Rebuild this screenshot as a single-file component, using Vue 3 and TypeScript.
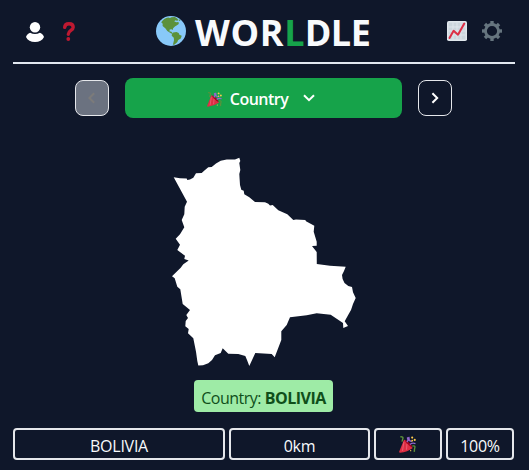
<script setup lang="ts">
const guess = { name: 'BOLIVIA', distance: '0km', proximity: '100%' }
const outline =
  '173.7,177.3 180,178.3 186.7,178.4 187.3,180 190,179.5 193.3,177.7 196,173.3 201.7,173 205,170 208.3,167.3 211.7,167 216,163.5 220.7,160.7 226.7,159.5 235,159.5 239.3,157.8 240.3,161 239.3,163 240.3,170 239.3,174 240,185 241.3,189.7 243.7,190.7 244.3,194.3 249.3,197.3 255,202 265,202.3 268.3,203.7 270,205.5 272.7,205 278.3,210.3 287.3,214.3 293.3,220 296,219.5 305.3,220 306,221.3 314.3,225.7 313.7,231.7 316.7,241.7 316.7,245.7 312,246 316.7,252 316.8,264 330,265.7 345.7,266.7 344,271 342,275 342.6,279 344.5,283 348.3,286 352,287 353,292.3 355.7,298 353,304 351,310 349,313.5 344.7,321.3 348,326 343.3,328 343,323 330.7,314.7 316.7,313.3 306.7,315.3 290,317.3 286.7,325 281.3,331.3 281.3,340 274.7,357.3 271.7,354 255.3,353 249.3,366 247,360 245.3,356 238.3,354 228.3,353.7 222.7,348.3 220.7,353 215,355.3 212,360 208.3,363.3 203,365.3 198.3,365.5 197.3,361 196,351.7 193.3,338.3 188,333.3 188.7,329 185.3,326.3 185.7,321 188,318 186.3,315 190,310 182.7,304 180.3,289.3 177.3,286.7 174.7,278.3 172,276.3 180.7,267.7 183.3,264.3 188.7,260.5 184.3,259 185,255.7 177.3,250 180,244.7 175.7,238.7 180,234.3 184.3,227.3 181.7,220 184.3,214.3 184.7,206.7 187,201.7'
</script>

<template>
  <main class="page">
    <svg class="defs" width="0" height="0" aria-hidden="true">
      <symbol id="popper" viewBox="0 0 16 16">
        <path d="M4.8 3.2 13 11.2Q8 14.8 1 15.8Q-.1 15.7.2 14.6Z" fill="#dd2e44" />
        <path d="M4.6 5.5 3.3 14M7.5 7.5 7 13" stroke="#ea596e" stroke-width="1" />
        <ellipse cx="9" cy="7.1" rx="1" ry="4.6" transform="rotate(-45 9 7.1)" fill="#a0041e" />
        <path d="M1.2.8Q4.3.5 3.6 2.5T3 5.3M12.5 9.6Q15.5 8.7 14.9 11T14.5 15" fill="none" stroke="#5c913b" stroke-width="1.3" />
        <path d="M7.4 5.6Q9.4 3.8 7.8 1.2M10.4 8Q12 6 15.5 7.1M9.2.8 9.7 4.2 12 5.2" fill="none" stroke="#9266cc" stroke-width="1.3" />
        <g fill="#ffcc4d">
          <circle cx="12.4" cy="1.5" r="1" /><circle cx="14.8" cy="3.7" r="1" />
          <circle cx="12.4" cy="4.4" r=".8" /><circle cx="11" cy="13.8" r=".6" />
        </g>
      </symbol>
    </svg>

    <header class="header">
      <div class="tools left">
        <svg width="18" height="20" viewBox="0 0 18 20" fill="#fff">
          <path d="M4.1 10.7Q9 13.2 13.9 10.7C16 11.4 17.6 13 18 15C16.5 18.3 13.2 20 9 20S1.5 18.3 0 15C.4 13 2 11.4 4.1 10.7Z" />
          <circle cx="9" cy="5.2" r="5.2" />
        </svg>
        <svg class="help" width="12" height="19" viewBox="0 0 12 19">
          <path d="M1.7 5.4C1.8 3 3.6 1.8 6 1.8C8.6 1.8 10.2 3.3 10.2 5.3C10.2 8.6 5.3 8.4 5.3 12.3" fill="none" stroke="#be1931" stroke-width="3.4" stroke-linecap="round" />
          <circle cx="5.3" cy="17" r="1.9" fill="#be1931" />
        </svg>
      </div>
      <h1 class="title">
        <svg class="globe" width="30" height="30" viewBox="0 0 30 30">
          <circle cx="15" cy="15" r="15" fill="#88c9f9" />
          <path d="M5.2 6.2C7 3.4 9.4 1.7 12.2 1.4L14 2 15.4 1.3 18.8 1.1 20.5 2.1 22 3.2 21.5 5 19.6 4.3 18.2 5.2 20.2 6.2 22.5 6 22.8 8.1 20.5 9.6 18.9 10.4 17.1 12.3 16.8 14 15.5 13.2 13.7 13.6 13.5 15.4 15 15.6 16.2 16.6 16.5 18 14.8 17.2 11.3 15.1 9.3 12.2 6.6 9.9 6.7 7.8Z" fill="#5c913b" />
          <path d="M17.2 16.5 20.5 15.9 22.7 17 23.4 18.7 25.7 19.8 24.8 22.5 22.2 24.1 21.2 26.2 18.2 28.7 16.9 28.8 18 24.2 17.8 21.8 15.7 19.8 16 17.8Z" fill="#5c913b" />
          <path d="M22.8 3.2 24.3 4.1 24.1 5.1 22.7 4.6Z" fill="#5c913b" />
        </svg>
        <span class="word"><span class="start">WOR</span><span class="accent">L</span><span class="end">DLE</span></span>
      </h1>
      <div class="tools right">
        <svg width="20" height="20" viewBox="0 0 20 20">
          <rect width="20" height="20" rx="1.8" fill="#e1e8ed" />
          <path d="M1.5 1.5h17v17h-17Z" fill="#ccd6dd" />
          <path d="M6 1.5v17M10 1.5v17M14 1.5v17M1.5 6h17M1.5 10h17M1.5 14h17" stroke="#e1e8ed" stroke-width=".9" />
          <path d="M2.5 17 6.6 9.8 11 13.7 17.3 2.5" fill="none" stroke="#dd2e44" stroke-width="2" stroke-linecap="round" stroke-linejoin="round" />
        </svg>
        <svg width="20" height="20" viewBox="0 0 20 20" stroke="#66757f" fill="none">
          <circle cx="10" cy="10" r="6.5" stroke-width="2.8" />
          <path v-for="n in 8" :key="n" d="M10 0V3.5" stroke-width="3.4" :transform="`rotate(${n * 45} 10 10)`" />
        </svg>
      </div>
    </header>

    <nav class="rounds">
      <button class="step disabled" disabled>
        <svg width="8" height="12" viewBox="0 0 8 12"><path d="M6.2 1.2 1.4 6l4.8 4.8" /></svg>
      </button>
      <button class="current">
        <svg class="party" width="15" height="15"><use href="#popper" /></svg>
        <span class="current-text">Country</span>
        <svg class="down" width="12" height="8" viewBox="0 0 12 8"><path d="M1 1.2 6 6.2l5-5" /></svg>
      </button>
      <button class="step">
        <svg width="8" height="12" viewBox="0 0 8 12"><path d="M1.4 1.2 6.2 6l-4.8 4.8" /></svg>
      </button>
    </nav>

    <section class="map">
      <svg width="190" height="215" viewBox="170 155 190 215"><polygon :points="outline" fill="#fff" /></svg>
    </section>

    <div class="answer"><span>Country: <b>{{ guess.name }}</b></span></div>

    <section class="guess">
      <div class="cell"><span class="name">{{ guess.name }}</span></div>
      <div class="cell"><span class="distance">{{ guess.distance }}</span></div>
      <div class="cell"><svg class="result" width="17" height="17"><use href="#popper" /></svg></div>
      <div class="cell"><span class="percent">{{ guess.proximity }}</span></div>
    </section>
  </main>
</template>

<style>
body {
  background: #0f172a;
}
</style>

<style scoped>
.page {
  box-sizing: border-box;
  height: 470px;
  padding: 0 14px 0 13px;
  overflow: hidden;
  background: #0f172a;
  color: #f8fafc;
  font: 16px/24px "Segoe UI", "Open Sans", "Noto Sans", sans-serif;
}
.defs {
  display: block;
}
.header {
  display: grid;
  grid-template-columns: 1fr auto 1fr;
  box-sizing: border-box;
  height: 64px;
  border-bottom: 2px solid #e2e8f0;
}
.tools {
  display: flex;
  align-items: center;
}
.left {
  gap: 19px;
  padding-left: 13px;
  padding-top: 2px;
}
.help {
  margin-top: -1px;
}
.right {
  justify-content: flex-end;
  gap: 15px;
  padding-right: 13px;
}
.title {
  display: flex;
  align-items: center;
  margin: 0;
  font-size: 36px;
  line-height: 40px;
  font-weight: 700;
}
.globe {
  margin-right: 9px;
}
.word {
  width: 177px;
  padding-top: 3px;
  white-space: nowrap;
}
.start {
  letter-spacing: 0.7px;
}
.accent {
  color: #16a34a;
}
.end {
  letter-spacing: -0.5px;
}
.rounds {
  display: flex;
  align-items: center;
  justify-content: center;
  gap: 16px;
  margin: 14px 1px 0 0;
}
button {
  display: flex;
  align-items: center;
  justify-content: center;
  box-sizing: border-box;
  padding: 0;
  border: 0;
  color: #fff;
  font: inherit;
}
button path {
  fill: none;
  stroke: currentColor;
  stroke-width: 2;
}
.step {
  width: 34px;
  height: 36px;
  border: 1px solid #e5e7eb;
  border-radius: 8px;
  background: #0f172a;
}
.disabled {
  background: #6b7280;
  color: #7c7b7a;
}
.current {
  width: 277px;
  height: 40px;
  padding-right: 5px;
  border-radius: 8px;
  background: #16a34a;
  font-weight: 600;
}
.party {
  margin: 2px 8px 0 0;
}
.current-text {
  margin-top: 2px;
  letter-spacing: -0.5px;
}
.down {
  margin-left: 15px;
}
.map {
  display: flex;
  justify-content: center;
  margin: 37px 0 10px 1px;
}
.answer {
  display: flex;
  align-items: center;
  justify-content: center;
  width: 139px;
  height: 32px;
  margin: 0 auto 0 181px;
  border-radius: 4px;
  background: #9eeba6;
  color: #0f4f1a;
  letter-spacing: -0.5px;
  white-space: nowrap;
}
.answer span {
  padding-top: 3px;
}
.guess {
  display: grid;
  grid-template-columns: 212px 141px 68px 68px;
  gap: 4px;
  margin-top: 16px;
}
.cell {
  display: flex;
  align-items: center;
  justify-content: center;
  box-sizing: border-box;
  height: 32px;
  border: 2px solid #e5e7eb;
  border-radius: 4px;
}
.cell span {
  padding-top: 3px;
}
.result {
  margin-right: 1px;
}
.cell .name,
.cell .distance,
.cell .percent {
  letter-spacing: -0.25px;
}
</style>
